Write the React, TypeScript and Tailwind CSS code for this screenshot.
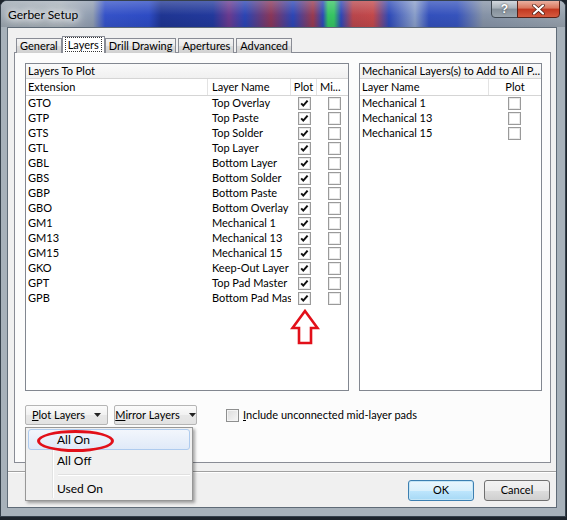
import React from "react";

const LAYERS: [string, string][] = [
  ["GTO", "Top Overlay"],
  ["GTP", "Top Paste"],
  ["GTS", "Top Solder"],
  ["GTL", "Top Layer"],
  ["GBL", "Bottom Layer"],
  ["GBS", "Bottom Solder"],
  ["GBP", "Bottom Paste"],
  ["GBO", "Bottom Overlay"],
  ["GM1", "Mechanical 1"],
  ["GM13", "Mechanical 13"],
  ["GM15", "Mechanical 15"],
  ["GKO", "Keep-Out Layer"],
  ["GPT", "Top Pad Master"],
  ["GPB", "Bottom Pad Master"],
];

const MECH = ["Mechanical 1", "Mechanical 13", "Mechanical 15"];

function Check({ checked }: { checked?: boolean }) {
  return (
    <span className="relative block w-[13px] h-[13px] border border-[#9a9a9a] bg-white">
      <span className="absolute inset-0 border border-[#eaeaea]" />
      {checked && (
        <svg className="absolute inset-0" width="11" height="11" viewBox="0 0 11 11">
          <path d="M2.2 5.4 L4.3 7.6 L8.6 2.6" fill="none" stroke="#111" strokeWidth="2" />
        </svg>
      )}
    </span>
  );
}

function TitleBar() {
  return (
    <div className="h-[26px] flex items-start bg-[linear-gradient(180deg,rgba(255,255,255,0.22),rgba(255,255,255,0)_55%,rgba(0,0,0,0.08)),linear-gradient(90deg,#9da7b1_0px,#a9b2bb_60px,#8f9cb0_92px,#3552c8_104px,#2d4bc4_148px,#1f3592_160px,#22399c_212px,#6b3a8e_228px,#2a45b4_244px,#8a3658_270px,#2b46b6_292px,#9a3a4e_312px,#2c48b8_322px,#36c462_327px,#36c462_333px,#2c48b8_340px,#b8464c_352px,#c2484a_372px,#2e4ab8_388px,#8a9ec8_414px,#3350bc_428px,#3653bc_456px,#8592a6_482px,#97a2ad_566px)]">
      <span className="mt-[7px] ml-[7px] text-[12px] leading-[14px] text-black [text-shadow:0_0_6px_#fff,0_0_10px_#fff,0_0_12px_#fff]">
        Gerber Setup
      </span>
      <div className="ml-auto mr-[5px] -mt-px flex">
        <div className="w-[27px] h-[18px] rounded-bl-[4px] border border-[#3f4852] bg-[linear-gradient(180deg,#d3d8de,#a7b0b9_45%,#848f9a_50%,#9aa4ae)] flex items-center justify-center">
          <span className="text-white font-bold text-[12px] leading-none font-['Liberation_Sans',sans-serif] [text-shadow:0_0_2px_#333]">?</span>
        </div>
        <div className="w-[43px] h-[18px] -ml-px rounded-br-[4px] border border-[#5a2218] bg-[linear-gradient(180deg,#eab0a0,#d9755c_45%,#c2371f_50%,#d65b3f)] flex items-center justify-center">
          <svg width="13" height="11" viewBox="0 0 13 11">
            <path d="M2 1.5 L11 9.5 M11 1.5 L2 9.5" stroke="#4a1a12" strokeWidth="3.6" strokeLinecap="round" />
            <path d="M2 1.5 L11 9.5 M11 1.5 L2 9.5" stroke="#fff" strokeWidth="2.2" strokeLinecap="round" />
          </svg>
        </div>
      </div>
    </div>
  );
}

function Tabs() {
  const tabs = ["General", "Layers", "Drill Drawing", "Apertures", "Advanced"];
  return (
    <div className="flex items-end h-[17px] pl-[2px] relative z-10">
      {tabs.map((t) =>
        t === "Layers" ? (
          <div
            key={t}
            className="h-[17px] px-[2px] -ml-[2px] mr-0 pb-[1px] border border-b-0 border-[#898c95] bg-white flex items-center relative z-10"
          >
            <span className="px-[2px] leading-[13px] border border-dotted border-[#333]">{t}</span>
          </div>
        ) : (
          <div
            key={t}
            className="h-[15px] px-[3px] mr-[2px] pb-[1px] border border-b-0 border-[#898c95] bg-[linear-gradient(180deg,#f4f4f4,#e9e9e9_50%,#dcdcdc_51%,#d0d0d0)] flex items-center leading-[13px]"
          >
            {t}
          </div>
        )
      )}
    </div>
  );
}

function LayersGrid() {
  return (
    <div className="relative w-[324px] h-[328px] border border-[#828790] bg-white flex flex-col">
      <div className="h-[15px] border-b border-[#d5d5d5] bg-[linear-gradient(180deg,#fafafa,#f0f0f0)] pl-[2px] flex items-center">
        Layers To Plot
      </div>
      <div className="h-[17px] border-b border-[#d5d5d5] flex">
        <div className="w-[182px] pl-[2px] flex items-center border-r border-[#e3e3e3]">Extension</div>
        <div className="w-[83px] pl-[4px] flex items-center border-r border-[#e3e3e3]">Layer Name</div>
        <div className="w-[26px] flex items-center justify-center border-r border-[#e3e3e3]">Plot</div>
        <div className="w-[30px] pl-[3px] flex items-center">Mi...</div>
      </div>
      {LAYERS.map(([ext, name]) => (
        <div key={ext} className="h-[15px] flex items-center">
          <div className="w-[182px] pl-[2px]">{ext}</div>
          <div className="w-[83px] pl-[4px] whitespace-nowrap overflow-hidden">{name}</div>
          <div className="w-[26px] flex justify-center pl-[1px]">
            <Check checked />
          </div>
          <div className="w-[30px] flex justify-center pl-[4px]">
            <Check />
          </div>
        </div>
      ))}
      <svg className="absolute left-[264px] top-[245px]" width="30" height="36" viewBox="0 0 30 36">
        <path
          d="M15 2 L27.5 19 L21 19 L21 34 L9 34 L9 19 L2.5 19 Z"
          fill="none"
          stroke="#e2101a"
          strokeWidth="2.6"
          strokeLinejoin="miter"
        />
      </svg>
    </div>
  );
}

function MechGrid() {
  return (
    <div className="w-[183px] h-[328px] border border-[#828790] bg-white flex flex-col">
      <div className="h-[15px] border-b border-[#d5d5d5] bg-[linear-gradient(180deg,#fafafa,#f0f0f0)] pl-[2px] flex items-center whitespace-nowrap">
        Mechanical Layers(s) to Add to All P...
      </div>
      <div className="h-[17px] border-b border-[#d5d5d5] flex">
        <div className="w-[129px] pl-[2px] flex items-center border-r border-[#e3e3e3]">Layer Name</div>
        <div className="flex-1 flex items-center justify-center">Plot</div>
      </div>
      {MECH.map((m) => (
        <div key={m} className="h-[15px] flex items-center">
          <div className="w-[129px] pl-[2px]">{m}</div>
          <div className="flex-1 flex justify-center pr-[2px]">
            <Check />
          </div>
        </div>
      ))}
    </div>
  );
}

function DropButton({ label, accel }: { label: string; accel: string }) {
  return (
    <div className="w-[83px] h-[20px] rounded-[2px] border border-[#b5b5b5] bg-[linear-gradient(180deg,#fbfbfb,#f1f1f1_50%,#e7e7e7_51%,#e2e2e2)] flex items-center justify-center gap-[9px]">
      <span>
        <span className="underline">{accel}</span>
        {label.slice(1)}
      </span>
      <svg width="7" height="4" viewBox="0 0 7 4">
        <path d="M0 0 H7 L3.5 4 Z" fill="#222" />
      </svg>
    </div>
  );
}

function PlotMenu() {
  return (
    <div className="absolute left-0 top-[22px] w-[168px] h-[74px] border border-[#979797] bg-[#f0f0f0] shadow-[2px_2px_3px_rgba(0,0,0,0.35)] pt-[1px] px-[2px] z-20">
      <div className="absolute left-[26px] top-[2px] bottom-[2px] w-px bg-[#e2e3e3]" />
      <div className="absolute left-[27px] top-[2px] bottom-[2px] w-px bg-white" />
      <div className="relative h-[21px] rounded-[3px] border border-[#aecbee] bg-[linear-gradient(180deg,#f2f6fc,#e0eaf8)] flex items-center pl-[28px] text-[12px]">
        All On
      </div>
      <div className="relative h-[21px] flex items-center pl-[29px] text-[12px]">All Off</div>
      <div className="relative h-[7px] ml-[30px] flex flex-col justify-center">
        <div className="h-px bg-[#e0e0e0]" />
        <div className="h-px bg-white" />
      </div>
      <div className="relative h-[21px] flex items-center pl-[29px] text-[12px]">Used On</div>
      <div className="absolute left-[11px] top-[2px] w-[77px] h-[22px] rounded-[50%] border-[3px] border-[#e2101a]" />
    </div>
  );
}

export default function App() {
  return (
    <div className="w-[567px] h-[520px] bg-[#1c232b] overflow-hidden font-['Lato',sans-serif] text-[11px] text-black">
      <div className="w-[566px] h-[517px] rounded-t-[7px] border border-[#36414c] bg-[#a7b1ba] flex flex-col overflow-hidden">
        <TitleBar />
        <div className="ml-[6px] mr-[8px] mb-[8px] flex-1 border border-[#5f6b77] bg-[#f0f0f0] flex flex-col">
          <div className="pt-[8px] pl-[6px] pr-[5px]">
            <Tabs />
            <div className="h-[411px] -mt-px border border-[#898c95] bg-[#fcfcfc] pt-[10px] pl-[10px]">
              <div className="flex gap-[10px]">
                <LayersGrid />
                <MechGrid />
              </div>
              <div className="relative mt-[14px] h-[20px] flex items-center">
                <DropButton label="Plot Layers" accel="P" />
                <div className="ml-[6px]">
                  <DropButton label="Mirror Layers" accel="M" />
                </div>
                <div className="ml-[29px] flex items-center gap-[4px]">
                  <span className="block w-[13px] h-[13px] border border-[#8e8f8f] bg-[linear-gradient(135deg,#dcdcdc,#f6f6f6)] shadow-[inset_0_0_0_1px_#f4f4f4]" />
                  <span>
                    <span className="underline">I</span>nclude unconnected mid-layer pads
                  </span>
                </div>
                <PlotMenu />
              </div>
            </div>
          </div>
          <div className="mt-[8px] border-t border-[#a0a0a0] shadow-[inset_0_1px_0_#ffffff] flex-1 flex justify-end items-start pt-[8px] pr-[6px] gap-[10px]">
            <div className="w-[66px] h-[21px] rounded-[3px] border border-[#3c7fb1] bg-[linear-gradient(180deg,#eaf6fd,#d9f0fc_50%,#bee6fd_51%,#a7d9f5)] shadow-[inset_0_0_0_1px_#c4e5f6] flex items-center justify-center">
              OK
            </div>
            <div className="w-[66px] h-[21px] rounded-[3px] border border-[#707070] bg-[linear-gradient(180deg,#f2f2f2,#ebebeb_50%,#dddddd_51%,#cfcfcf)] flex items-center justify-center">
              Cancel
            </div>
          </div>
        </div>
      </div>
    </div>
  );
}
